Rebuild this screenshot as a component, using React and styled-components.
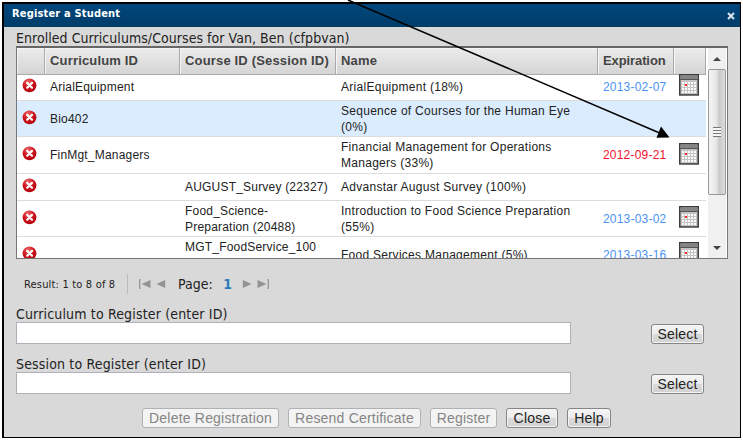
import React from 'react';
import styled, { createGlobalStyle } from 'styled-components';

const COURSES = [
  { id: 'ArialEquipment', course: '', name: 'ArialEquipment (18%)', date: '2013-02-07', height: 28 },
  { id: 'Bio402', course: '', name: 'Sequence of Courses for the Human Eye\n(0%)', date: '', height: 36, active: true },
  { id: 'FinMgt_Managers', course: '', name: 'Financial Management for Operations\nManagers (33%)', date: '2012-09-21', height: 37, expired: true },
  { id: '', course: 'AUGUST_Survey (22327)', name: 'Advanstar August Survey (100%)', date: '', height: 27 },
  { id: '', course: 'Food_Science-\nPreparation (20488)', name: 'Introduction to Food Science Preparation\n(55%)', date: '2013-03-02', height: 36 },
  { id: '', course: 'MGT_FoodService_100\n ', name: 'Food Services Management (5%)', date: '2013-03-16', height: 36 },
];

const DeleteIcon = () => (
  <svg width="15" height="15" viewBox="0 0 15 15">
    <defs>
      <radialGradient id="red" cx="0.4" cy="0.25" r="0.8">
        <stop offset="0" stopColor="#ec6a6a" />
        <stop offset="0.5" stopColor="#cf1820" />
        <stop offset="1" stopColor="#b00008" />
      </radialGradient>
    </defs>
    <circle cx="7.5" cy="7.3" r="6.9" fill="url(#red)" />
    <path d="M5.2 4.9l4.8 4.8M10 4.9L5.2 9.7" stroke="#fff" strokeWidth="2.2" strokeLinecap="round" />
  </svg>
);

const DOTS = [0, 1, 2, 3, 4].flatMap(x => [0, 1, 2, 3].map(y => [x, y]));

const CalendarIcon = () => (
  <svg width="20" height="22" viewBox="0 0 20 22">
    <rect x="0.75" y="0.75" width="18.5" height="20.2" fill="#c4c4c4" stroke="#3c3c3c" strokeWidth="1.5" />
    <rect x="1.5" y="1.5" width="17" height="4" fill="#858585" />
    <path d="M1 5.5h18" stroke="#555" />
    {DOTS.map(([x, y]) => (
      <rect key={`${x}${y}`} x={3 + x * 3} y={8 + y * 3} width="2" height="2" fill="#fafafa" />
    ))}
    <rect x="6" y="10" width="2" height="2" fill="#f22" />
  </svg>
);

const PageIcon = ({ flip, bar }) => (
  <svg width={bar ? 12 : 10} height="10" viewBox={bar ? '0 0 12 10' : '0 0 10 10'}>
    <g transform={flip ? `translate(${bar ? 12 : 10} 0) scale(-1 1)` : undefined} fill="#949494">
      {bar && <rect x="0" y="0" width="1.3" height="10" />}
      <path d={bar ? 'M11.5 1v8L2.5 5z' : 'M9.2 1v8L0.5 5z'} />
    </g>
  </svg>
);

const App = () => {
  return (
    <Page>
      <GlobalStyle />
      <Dialog>
        <TitleBar>
          <Title>Register a Student</Title>
          <svg width="8" height="8" viewBox="0 0 8 8">
            <path d="M1 1l6 6M7 1L1 7" stroke="#dce6ee" strokeWidth="2" />
          </svg>
        </TitleBar>
        <Body>
          <Label $spacing="0.05px">Enrolled Curriculums/Courses for Van, Ben (cfpbvan)</Label>
          <Grid>
            <Table>
              <Row $height={25}>
                <HeadCell />
                <HeadCell>Curriculum ID</HeadCell>
                <HeadCell>Course ID (Session ID)</HeadCell>
                <HeadCell>Name</HeadCell>
                <HeadCell $spacing="-0.1px">Expiration</HeadCell>
                <HeadCell />
              </Row>
              {COURSES.map(row => (
                <CourseRow key={row.name} $height={row.height} $active={row.active}>
                  <IconCell>
                    <DeleteIcon />
                  </IconCell>
                  <Cell>{row.id}</Cell>
                  <Cell>{row.course}</Cell>
                  <NameCell>{row.name}</NameCell>
                  <DateCell $expired={row.expired}>{row.date}</DateCell>
                  <CalendarCell>{row.date && <CalendarIcon />}</CalendarCell>
                </CourseRow>
              ))}
            </Table>
            <ScrollBar>
              <Arrow>
                <svg width="8" height="4" viewBox="0 0 8 4">
                  <path d="M0 4L4 0l4 4z" fill="#444" />
                </svg>
              </Arrow>
              <Thumb>
                <Grip />
              </Thumb>
              <Arrow>
                <svg width="8" height="4" viewBox="0 0 8 4">
                  <path d="M0 0h8L4 4z" fill="#444" />
                </svg>
              </Arrow>
            </ScrollBar>
          </Grid>
          <Pager>
            <Result>Result: 1 to 8 of 8</Result>
            <PageNav>
              <PageIcon bar />
              <PageIcon />
              <PageText>
                Page: <PageNumber>1</PageNumber>
              </PageText>
              <PageIcon flip />
              <PageIcon flip bar />
            </PageNav>
          </Pager>
          <Field>
            <Label $spacing="0.16px">Curriculum to Register (enter ID)</Label>
            <FieldRow>
              <Input />
              <Button $width={53}>Select</Button>
            </FieldRow>
          </Field>
          <Field>
            <Label $spacing="0.16px">Session to Register (enter ID)</Label>
            <FieldRow>
              <Input />
              <Button $width={53}>Select</Button>
            </FieldRow>
          </Field>
          <Actions>
            <Button $width={137} disabled>Delete Registration</Button>
            <Button $width={133} disabled>Resend Certificate</Button>
            <Button $width={67} disabled>Register</Button>
            <Button $width={52}>Close</Button>
            <Button $width={44}>Help</Button>
          </Actions>
        </Body>
      </Dialog>
      <Pointer width="743" height="442" viewBox="0 0 743 442">
        <path d="M348 0L662 134" stroke="#000" strokeWidth="1.5" />
        <path d="M669.5 137.5L656.5 137.8L661 126.5z" fill="#000" />
      </Pointer>
    </Page>
  );
};

export default App;

const GlobalStyle = createGlobalStyle`
  * {
    box-sizing: border-box;
  }
  body {
    margin: 0;
    background-color: #fff;
  }
  svg {
    display: block;
    flex-shrink: 0;
  }
`;

const Page = styled.div`
  position: relative;
  width: 743px;
  height: 442px;
  padding: 2px 2px 4px;
  overflow: hidden;
  font-family: 'Liberation Sans', Arial, sans-serif;
`;

const Dialog = styled.div`
  width: 739px;
  height: 436px;
  border: solid #000;
  border-width: 2px 1px 1px 2px;
  background-color: #d9d9d9;
`;

const TitleBar = styled.div`
  display: flex;
  align-items: center;
  justify-content: space-between;
  height: 23px;
  padding: 0 5px 0 8px;
  background: linear-gradient(#01477d, #003c68);
`;

const Title = styled.h1`
  margin: 0;
  padding-bottom: 4px;
  color: #fff;
  font: bold 11px 'DejaVu Sans Condensed', 'DejaVu Sans', sans-serif;
  letter-spacing: 0.17px;
`;

const Body = styled.div`
  padding: 2px 12px 0;
`;

const Label = styled.div`
  height: 17px;
  color: #222;
  font: 14px/18px 'DejaVu Sans Condensed', 'DejaVu Sans', sans-serif;
  letter-spacing: ${({ $spacing }) => $spacing};
  white-space: nowrap;
`;

const Grid = styled.div`
  display: flex;
  width: 712px;
  height: 213px;
  border: 1px solid #777;
  border-top: 2px solid #666;
  background-color: #fff;
  overflow: hidden;
`;

const Table = styled.div`
  width: 689px;
`;

const Row = styled.div`
  display: grid;
  grid-template-columns: 28px 135px 156px 262px 76px 32px;
  height: ${({ $height }) => $height}px;
`;

const CourseRow = styled(Row)`
  align-items: center;
  border-bottom: 1px solid #dcdcdc;
  background-color: ${({ $active }) => ($active ? '#dbecff' : '#fff')};
`;

const HeadCell = styled.div`
  padding-left: 5px;
  border: 1px solid #aaa;
  border-width: 0 1px 1px 0;
  background: linear-gradient(#ececec, #d4d4d4);
  box-shadow: inset 1px 1px #f5f5f5;
  color: #444;
  font-size: 13px;
  font-weight: bold;
  line-height: 26px;
  letter-spacing: ${({ $spacing }) => $spacing || '0.17px'};
  white-space: nowrap;
`;

const Cell = styled.div`
  padding: 0 0 0 5px;
  color: #222;
  font-size: 12px;
  line-height: 16px;
  letter-spacing: 0.2px;
  white-space: pre;
`;

const NameCell = styled(Cell)`
  letter-spacing: 0.28px;
`;

const DateCell = styled(Cell)`
  color: ${({ $expired }) => ($expired ? '#f5122c' : '#4a94f5')};
`;

const IconCell = styled.div`
  padding: 0 0 3px 5px;
`;

const CalendarCell = styled.div`
  padding: 0 0 3px 5px;
`;

const ScrollBar = styled.div`
  display: flex;
  flex-direction: column;
  width: 18px;
  margin-left: 2px;
  background-color: #f0f0f0;
`;

const Arrow = styled.div`
  display: flex;
  align-items: center;
  justify-content: center;
  height: 21px;
`;

const Thumb = styled.div`
  display: flex;
  align-items: center;
  justify-content: center;
  height: 126px;
  margin-bottom: 42px;
  border: 1px solid #999;
  border-radius: 2px;
  background: linear-gradient(90deg, #f4f4f4, #e6e6e8 45%, #c9c9cc 65%, #dcdcde);
`;

const Grip = styled.div`
  width: 8px;
  height: 10px;
  background: repeating-linear-gradient(#777 0 1px, #f6f6f6 1px 3px);
`;

const Pager = styled.div`
  display: flex;
  align-items: center;
  height: 46px;
  padding: 4px 0 0 8px;
`;

const Result = styled.div`
  width: 103px;
  color: #222;
  font: 11px 'DejaVu Sans Condensed', 'DejaVu Sans', sans-serif;
  letter-spacing: 0.18px;
  white-space: nowrap;
`;

const PageNav = styled.div`
  display: flex;
  align-items: center;
  gap: 5px;
  height: 20px;
  padding-left: 11px;
  border-left: 1px solid #bbb;
`;

const PageText = styled.div`
  display: flex;
  justify-content: space-between;
  width: 54px;
  margin: 0 5px 0 7px;
  color: #222;
  font: 14px 'DejaVu Sans Condensed', 'DejaVu Sans', sans-serif;
`;

const PageNumber = styled.b`
  color: #2c78b8;
`;

const Field = styled.div`
  height: 50px;
`;

const FieldRow = styled.div`
  display: flex;
  align-items: flex-end;
  justify-content: space-between;
  width: 688px;
`;

const Input = styled.input`
  width: 555px;
  height: 22px;
  padding: 0 4px;
  border: 1px solid #b0b1b8;
  background-color: #fff;
`;

const Button = styled.button`
  width: ${({ $width }) => $width}px;
  height: 20px;
  padding: 0;
  border: 1px solid #858585;
  border-radius: 3px;
  background: linear-gradient(#f5f5f5, #ebebeb 50%, #dadada 51%, #d2d2d2);
  box-shadow: inset 0 0 0 1px #f4f4f4;
  color: #222;
  font: 14px/17px 'Liberation Sans', Arial, sans-serif;
  letter-spacing: 0.2px;
  white-space: nowrap;

  &:disabled {
    border-color: #adb2b5;
    background: #f3f3f3;
    color: #858585;
  }
`;

const Actions = styled.div`
  display: flex;
  gap: 9px;
  padding: 3px 0 0 126px;
`;

const Pointer = styled.svg`
  position: absolute;
  top: 0;
  left: 0;
  pointer-events: none;
`;
